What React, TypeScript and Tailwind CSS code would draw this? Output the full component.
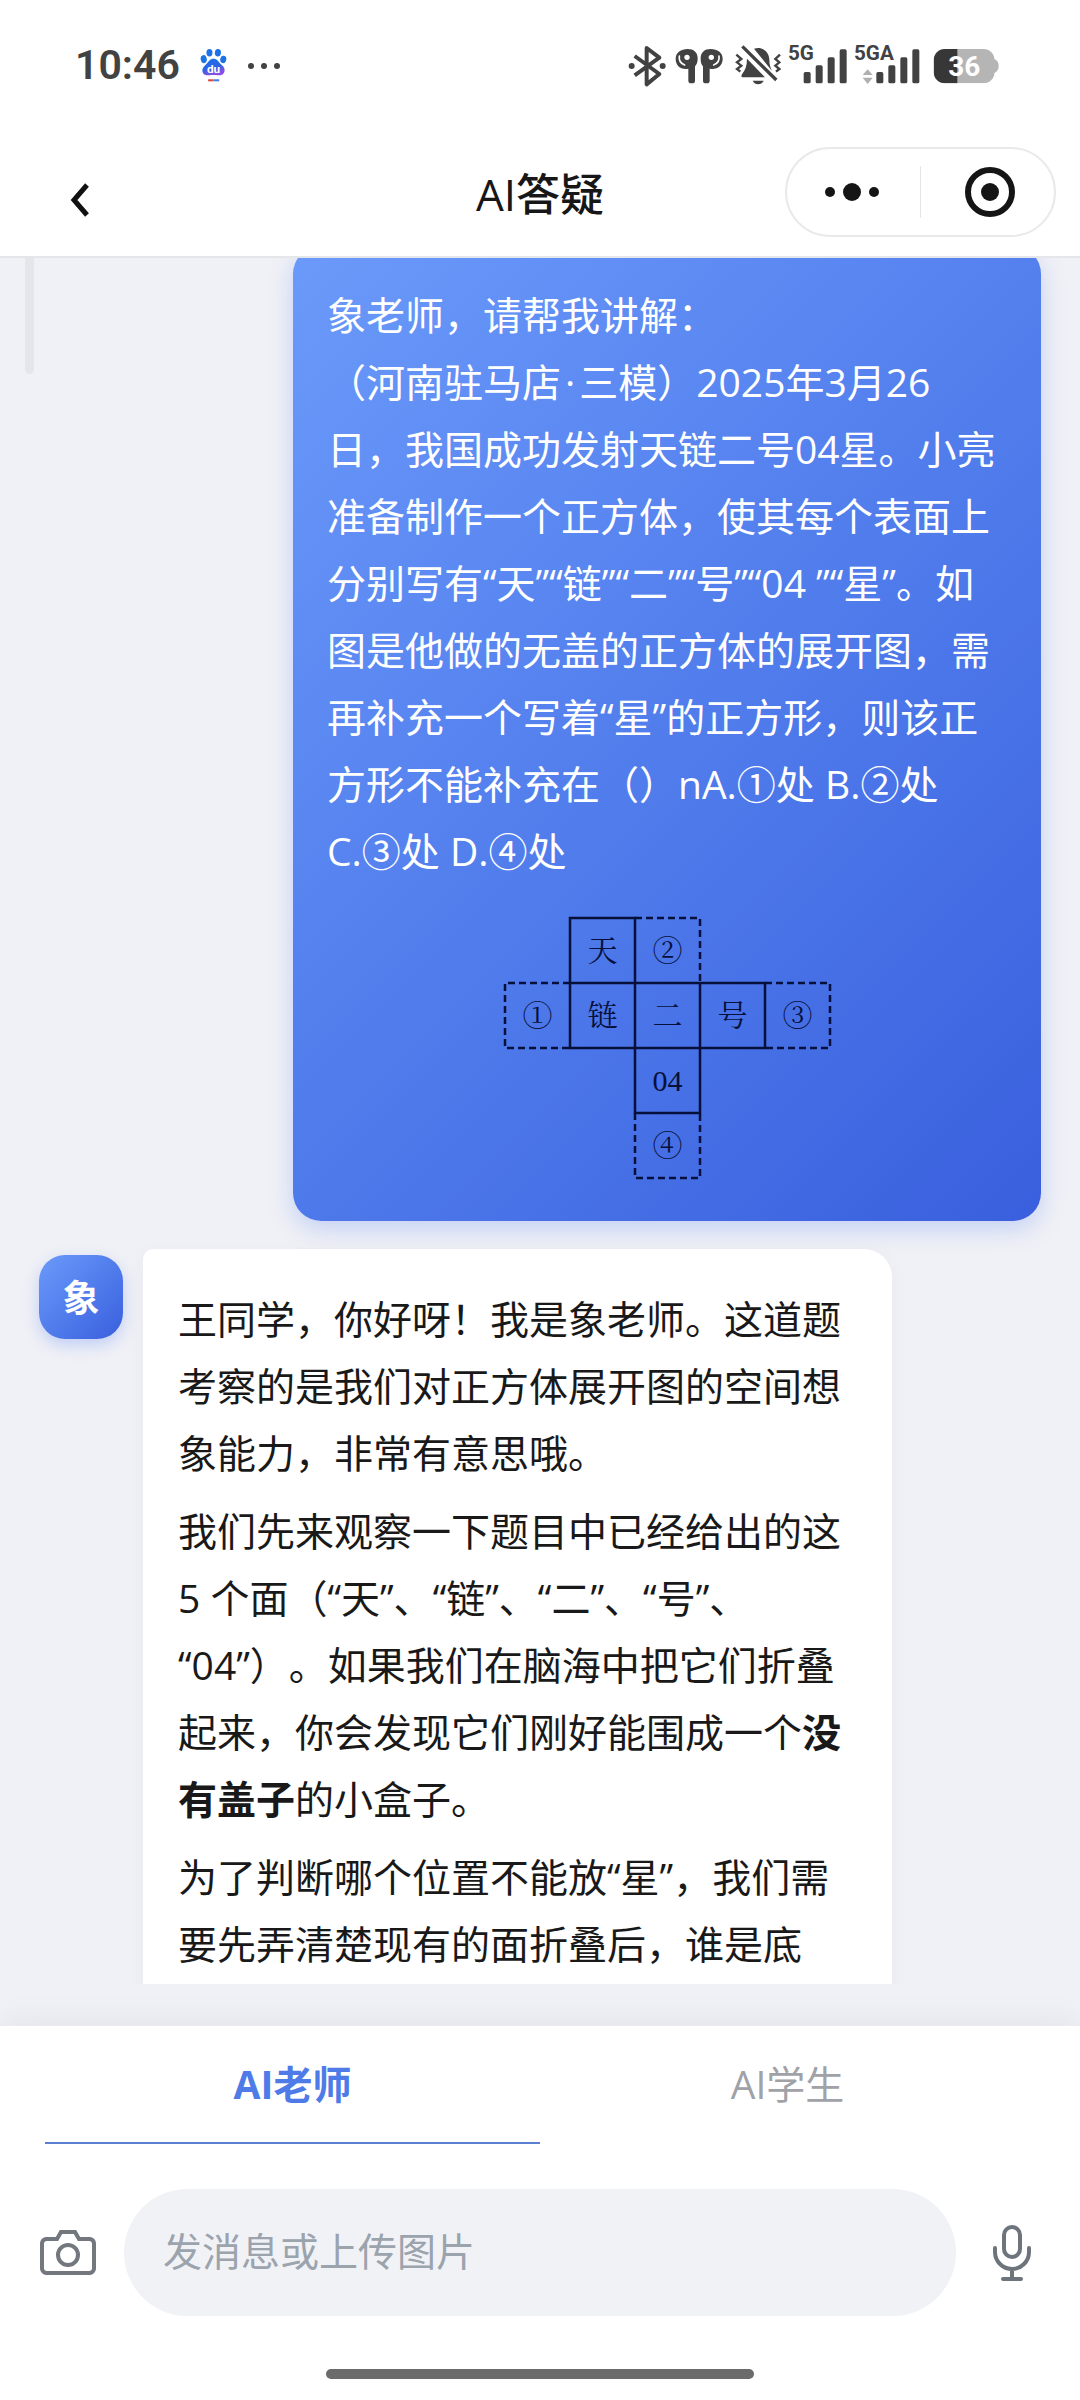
import type { ReactNode } from "react";
import { clsx } from "clsx";

type Cell = {
  col: number;
  row: number;
  label: string;
};

const CELL = 65;

const cells: Cell[] = [
  { col: 1, row: 0, label: "天" },
  { col: 2, row: 0, label: "②" },
  { col: 0, row: 1, label: "①" },
  { col: 1, row: 1, label: "链" },
  { col: 2, row: 1, label: "二" },
  { col: 3, row: 1, label: "号" },
  { col: 4, row: 1, label: "③" },
  { col: 2, row: 2, label: "04" },
  { col: 2, row: 3, label: "④" },
];

const tabs = [
  { id: "teacher", label: "AI老师", active: true },
  { id: "student", label: "AI学生", active: false },
];

function BaiduIcon() {
  return (
    <svg viewBox="450 92 80 104" className="h-[35px] w-[27px]" aria-hidden="true">
      <defs>
        <linearGradient id="paw" x1="0" y1="0" x2="0.4" y2="1">
          <stop offset="0" stopColor="#1673e8" />
          <stop offset="0.6" stopColor="#2c63e4" />
          <stop offset="1" stopColor="#8a4fe8" />
        </linearGradient>
      </defs>
      <ellipse cx="461" cy="125" rx="9" ry="12" fill="#1d72e6" transform="rotate(-12 461 125)" />
      <ellipse cx="478" cy="106" rx="9" ry="11" fill="#1d72e6" />
      <ellipse cx="503" cy="106" rx="9" ry="11" fill="#1d72e6" transform="rotate(8 503 106)" />
      <ellipse cx="519" cy="126" rx="9" ry="11" fill="#1d72e6" transform="rotate(12 519 126)" />
      <path
        d="M490 124c10 0 13 7 19 13 7 7 15 12 14 22-1 12-10 15-18 14-7-1-22-1-29 0-9 1-19-2-19-14 0-10 8-15 14-22 6-6 9-13 19-13z"
        fill="url(#paw)"
      />
      <text
        x="490"
        y="166"
        textAnchor="middle"
        fontSize="35"
        fontWeight="700"
        fill="#fff"
        className="font-['Roboto',sans-serif]"
      >
        du
      </text>
      <path d="M474 188h16" stroke="#d9453f" strokeWidth="6" />
      <path d="M490 188h17" stroke="#3f7ce8" strokeWidth="6" />
    </svg>
  );
}

function BluetoothIcon() {
  return (
    <svg viewBox="52 68 114 132" className="h-11 w-[38px]" fill="none" aria-hidden="true">
      <path
        d="M72 104l74 54-38 31V80l38 29-74 53"
        stroke="#424242"
        strokeWidth="12"
        strokeLinejoin="round"
      />
      <circle cx="63" cy="134" r="9" fill="#424242" />
      <circle cx="156" cy="134" r="9" fill="#424242" />
    </svg>
  );
}

function EarbudsIcon() {
  return (
    <svg viewBox="193 68 144 132" className="h-11 w-12" aria-hidden="true">
      <g fill="#424242">
        <path d="M195 112c0-18 16-29 36-29 18 0 30 10 30 28 0 14-4 20-8 24v44c0 5-3 7-8 7h-4c-5 0-8-3-8-8v-36c-22 4-38-8-38-30z" />
        <path d="M336 112c0-18-16-29-36-29-18 0-30 10-30 28 0 14 3 20 7 24v44c0 5 3 7 8 7h4c5 0 8-3 8-8v-36c22 4 39-8 39-30z" />
      </g>
      <g fill="none" stroke="#fff" strokeWidth="5" strokeLinecap="round">
        <path d="M206 104c-2 14 5 23 16 27" />
        <path d="M325 104c2 14-5 23-16 27" />
      </g>
      <circle cx="229" cy="108" r="8" fill="#fff" />
      <circle cx="302" cy="108" r="8" fill="#fff" />
    </svg>
  );
}

function SilentIcon() {
  return (
    <svg viewBox="373 68 138 132" className="h-11 w-[46px]" aria-hidden="true">
      <path
        d="M430 82c24-8 46 8 46 34 0 15 4 24 8 33zM409 112l54 56h-66c-6 0-6-6-2-11 9-11 14-25 14-45z"
        fill="#424242"
      />
      <path d="M426 178h33c-6 14-27 14-33 0z" fill="#424242" />
      <g fill="none" stroke="#424242">
        <path d="M395 75l102 101" strokeWidth="10" />
        <path d="M377 100l15 13-13 10 13 10-13 10 10 8" strokeWidth="7" />
        <path d="M508 100l-14 13 12 10-12 10 12 10-10 8" strokeWidth="7" />
      </g>
    </svg>
  );
}

function SignalIcon({ label, wide = false }: { label: string; wide?: boolean }) {
  return (
    <svg
      viewBox={wide ? "0 68 198 132" : "0 68 177 132"}
      className={wide ? "h-11 w-[66px] overflow-visible" : "h-11 w-[59px] overflow-visible"}
      aria-hidden="true"
    >
      <text
        x="0"
        y="116"
        fontSize="62"
        fontWeight="700"
        fill="#424242"
        className="font-['Roboto',sans-serif]"
      >
        {label}
      </text>
      <g fill="#424242" transform={wide ? "translate(20 0)" : undefined}>
        <rect x="47" y="152" width="21" height="34" rx="5" />
        <rect x="83" y="132" width="21" height="54" rx="5" />
        <rect x="119" y="108" width="21" height="78" rx="5" />
        <rect x="155" y="84" width="21" height="102" rx="5" />
      </g>
      {wide ? <path d="M41 144l15 17H26zM41 188l15-19H26z" fill="#b0b0b0" /> : null}
    </svg>
  );
}

function BatteryIcon() {
  return (
    <svg viewBox="968 68 198 132" className="h-11 w-[66px]" aria-hidden="true">
      <defs>
        <clipPath id="battery">
          <rect x="970" y="83" width="183" height="103" rx="34" />
        </clipPath>
      </defs>
      <path d="M1150 113c9 2 15 10 15 21s-6 19-15 21z" fill="#b5b5b5" />
      <g clipPath="url(#battery)">
        <rect x="970" y="83" width="183" height="103" fill="#b5b5b5" />
        <rect x="970" y="83" width="71" height="103" fill="#373737" />
      </g>
      <text
        x="1062"
        y="164"
        textAnchor="middle"
        fontSize="84"
        fontWeight="700"
        fill="#fff"
        className="font-['Roboto',sans-serif]"
      >
        36
      </text>
    </svg>
  );
}

function StatusBar() {
  return (
    <div className="flex h-[128px] items-center justify-between pt-[3px] pr-[81px] pl-[75px]">
      <div className="flex items-center">
        <span className="font-['Roboto',sans-serif] text-[41px] leading-none font-semibold text-[#424242]">
          10:46
        </span>
        <span className="ml-5">
          <BaiduIcon />
        </span>
        <svg viewBox="0 0 34 8" className="ml-5 h-2 w-[34px]" fill="#424242" aria-hidden="true">
          <circle cx="4" cy="4" r="3" />
          <circle cx="17" cy="4" r="3" />
          <circle cx="30" cy="4" r="3" />
        </svg>
      </div>
      <div className="flex items-center">
        <BluetoothIcon />
        <span className="ml-[9px]">
          <EarbudsIcon />
        </span>
        <span className="ml-3">
          <SilentIcon />
        </span>
        <span className="ml-[7px]">
          <SignalIcon label="5G" />
        </span>
        <span className="ml-[7px]">
          <SignalIcon label="5GA" wide />
        </span>
        <span className="ml-[13px]">
          <BatteryIcon />
        </span>
      </div>
    </div>
  );
}

function Header() {
  return (
    <header className="grid h-[130px] grid-cols-[1fr_auto_1fr] items-center border-b-2 border-[#e4e6ea] px-6">
      <button type="button" className="mt-4 ml-9 w-10 cursor-pointer" aria-label="返回">
        <svg viewBox="0 0 40 40" className="size-10" fill="none" aria-hidden="true">
          <path d="M27 5L14 20l13 15" stroke="#111" strokeWidth="5" />
        </svg>
      </button>
      <h1 className="pt-1 text-[44px] leading-none font-medium text-[#171717]">AI答疑</h1>
      <div className="flex h-[90px] w-[271px] items-center justify-self-end rounded-full border-2 border-[#e9e9e9] bg-white">
        <button
          type="button"
          className="flex flex-1 cursor-pointer justify-center pr-1"
          aria-label="更多"
        >
          <svg viewBox="0 0 56 20" className="h-5 w-14" fill="#151515" aria-hidden="true">
            <circle cx="6" cy="10" r="5" />
            <circle cx="28" cy="10" r="9" />
            <circle cx="50" cy="10" r="5" />
          </svg>
        </button>
        <span className="h-[52px] w-px bg-[#e4e4e4]" />
        <button
          type="button"
          className="flex flex-1 cursor-pointer justify-center pl-1"
          aria-label="关闭"
        >
          <svg viewBox="0 0 52 52" className="size-[52px]" aria-hidden="true">
            <circle cx="26" cy="26" r="22" fill="none" stroke="#151515" strokeWidth="6" />
            <circle cx="26" cy="26" r="9" fill="#151515" />
          </svg>
        </button>
      </div>
    </header>
  );
}

function CubeNet() {
  return (
    <svg
      viewBox="-2 -2 329 264"
      className="mx-auto mt-8 block h-[264px] w-[329px]"
      role="img"
      aria-label="正方体展开图"
    >
      <g fill="none" stroke="#07103a" strokeWidth="2.5">
        <path d="M130 0h65v65M65 65H0v65h65M260 65h65v65h-65M130 195v65h65v-65" strokeDasharray="7 4" />
        <path d="M65 0h65v195h65V65H65zM65 0v130h195V65h-65" />
      </g>
      {cells.map((cell) => (
        <text
          key={cell.label}
          x={cell.col * CELL + CELL / 2}
          y={cell.row * CELL + CELL / 2 + 10}
          textAnchor="middle"
          fontSize="30"
          fill="#07103a"
          className="font-['Liberation_Serif','Noto_Serif_CJK_SC','Noto_Sans_CJK_SC',serif]"
        >
          {cell.label}
        </text>
      ))}
    </svg>
  );
}

function UserMessage({ children }: { children: ReactNode }) {
  return (
    <article className="mr-[39px] ml-[293px] rounded-[28px] bg-linear-135 from-[#6b9afa] to-[#3a5fde] px-[34px] pt-[35px] pb-[41px] text-white shadow-[0_8px_24px_rgba(79,125,245,0.28)]">
      {children}
    </article>
  );
}

function TeacherMessage({ children }: { children: ReactNode }) {
  return (
    <div className="mr-[188px] ml-[39px] flex items-start gap-5">
      <div className="mt-[6px] flex size-[84px] shrink-0 items-center justify-center rounded-[26px] bg-linear-135 from-[#6b9afa] to-[#3a5fde] text-[37px] font-bold text-white shadow-[0_6px_16px_rgba(79,125,245,0.3)]">
        象
      </div>
      <article className="flex flex-1 flex-col gap-[11px] rounded-tl-[10px] rounded-tr-[28px] bg-white px-[35px] pt-9 pb-10 text-[#191919] shadow-[0_4px_20px_rgba(0,0,0,0.04)]">
        {children}
      </article>
    </div>
  );
}

function Composer() {
  return (
    <form className="flex items-center px-7 pt-[45px]" onSubmit={(e) => e.preventDefault()}>
      <button type="button" className="flex w-20 cursor-pointer justify-center" aria-label="上传图片">
        <svg viewBox="0 0 58 48" className="h-12 w-[58px]" fill="none" aria-hidden="true">
          <path
            d="M7 10h11l4-7h14l4 7h11a5 5 0 0 1 4 4v26a5 5 0 0 1-4 4H7a5 5 0 0 1-4-4V14a5 5 0 0 1 4-4z"
            stroke="#73777e"
            strokeWidth="4"
          />
          <circle cx="29" cy="26" r="10" stroke="#73777e" strokeWidth="4" />
        </svg>
      </button>
      <input
        type="text"
        aria-label="消息"
        placeholder="发消息或上传图片"
        className="mr-4 ml-4 h-[127px] min-w-0 flex-1 rounded-full bg-[#f1f2f6] px-[39px] pb-1 text-[39px] outline-none placeholder:text-[#9ba3ad]"
      />
      <button type="button" className="flex w-20 cursor-pointer justify-center" aria-label="语音输入">
        <svg viewBox="0 0 40 58" className="h-[58px] w-10" fill="none" aria-hidden="true">
          <g stroke="#6d747c" strokeWidth="4" strokeLinecap="round">
            <rect x="12" y="3" width="16" height="30" rx="8" />
            <path d="M3 24v4a17 17 0 0 0 34 0v-4M20 45v10M11 55h18" />
          </g>
        </svg>
      </button>
    </form>
  );
}

export default function App() {
  return (
    <div className="flex h-screen flex-col bg-[#f0f1f6] font-['Open_Sans','Noto_Sans_CJK_SC',sans-serif] [text-spacing-trim:space-all]">
      <div className="bg-white">
        <StatusBar />
        <Header />
      </div>

      <main className="relative min-h-0 flex-1 pb-[42px]">
        <span className="absolute top-0 left-[25px] h-[116px] w-[9px] rounded-b-full bg-[#e5e6ea]" />
        <div className="h-full overflow-hidden text-[39px] leading-[67px]">
          <div className="-mt-3 flex flex-col gap-7">
            <UserMessage>
              <p className="pr-[6px]">
                象老师，请帮我讲解：
                <br />
                （河南驻马店<span className="mx-1">·</span>
                三模）2025年3月26日，我国成功发射天链二号04星。小亮准备制作一个正方体，使其每个表面上分别写有“天”“链”“二”“号”“04
                ”“星”。如图是他做的无盖的正方体的展开图，需再补充一个写着“星”的正方形，则该正方形不能补充在（）nA.①处
                B.②处 <br />
                C.③处 D.④处
              </p>
              <CubeNet />
            </UserMessage>
            <TeacherMessage>
              <p>
                王同学，你好呀！我是象老师。这道题考察的是我们对正方体展开图的空间想象能力，非常有意思哦。
              </p>
              <p>
                我们先来观察一下题目中已经给出的这 5 个面（“天”、
                <wbr />
                “链”、
                <wbr />
                “二”、
                <wbr />
                “号”、
                <wbr />
                “04”）。如果我们在脑海中把它们折叠起来，你会发现它们刚好能围成一个
                <strong className="font-bold">没有盖子</strong>的小盒子。
              </p>
              <p>
                为了判断哪个位置不能放“星”，我们需要先弄清楚现有的面折叠后，谁是底
              </p>
            </TeacherMessage>
          </div>
        </div>
      </main>

      <footer className="relative bg-white shadow-[0_-4px_32px_rgba(0,0,0,0.06)]">
        <div className="flex px-[45px]" role="tablist">
          {tabs.map((tab) => (
            <button
              key={tab.id}
              type="button"
              role="tab"
              aria-selected={tab.active}
              className={clsx(
                "h-[118px] flex-1 cursor-pointer border-b-2 text-[39px]",
                tab.active
                  ? "border-[#5a7fd0] font-bold text-[#4f7be8]"
                  : "border-transparent text-[#a0a2a8]",
              )}
            >
              {tab.label}
            </button>
          ))}
        </div>
        <Composer />
        <div className="mx-auto mt-[53px] mb-[21px] h-[10px] w-[428px] rounded-full bg-[#6b6b6b]" />
      </footer>
    </div>
  );
}
